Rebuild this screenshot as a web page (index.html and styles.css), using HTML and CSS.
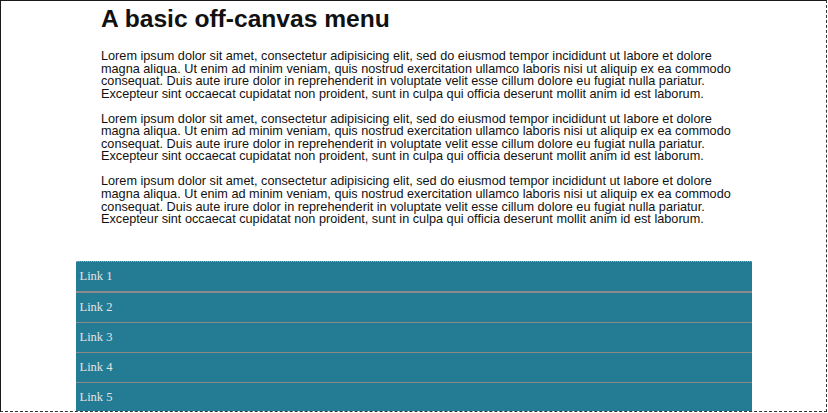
FILE: index.html
```html
<!DOCTYPE html>
<html>
<head>
<meta charset="utf-8">
<link rel="stylesheet" href="styles.css">
</head>
<body>
<div class="frame">
  <main class="content">
    <h1 class="title">A basic off-canvas menu</h1>
    <p class="para">Lorem ipsum dolor sit amet, consectetur adipisicing elit, sed do eiusmod tempor incididunt ut labore et dolore magna aliqua. Ut enim ad minim veniam, quis nostrud exercitation ullamco laboris nisi ut aliquip ex ea commodo consequat. Duis aute irure dolor in reprehenderit in voluptate velit esse cillum dolore eu fugiat nulla pariatur. Excepteur sint occaecat cupidatat non proident, sunt in culpa qui officia deserunt mollit anim id est laborum.</p>
    <p class="para">Lorem ipsum dolor sit amet, consectetur adipisicing elit, sed do eiusmod tempor incididunt ut labore et dolore magna aliqua. Ut enim ad minim veniam, quis nostrud exercitation ullamco laboris nisi ut aliquip ex ea commodo consequat. Duis aute irure dolor in reprehenderit in voluptate velit esse cillum dolore eu fugiat nulla pariatur. Excepteur sint occaecat cupidatat non proident, sunt in culpa qui officia deserunt mollit anim id est laborum.</p>
    <p class="para">Lorem ipsum dolor sit amet, consectetur adipisicing elit, sed do eiusmod tempor incididunt ut labore et dolore magna aliqua. Ut enim ad minim veniam, quis nostrud exercitation ullamco laboris nisi ut aliquip ex ea commodo consequat. Duis aute irure dolor in reprehenderit in voluptate velit esse cillum dolore eu fugiat nulla pariatur. Excepteur sint occaecat cupidatat non proident, sunt in culpa qui officia deserunt mollit anim id est laborum.</p>
  </main>
  <nav class="menu">
    <a class="menu-link first" href="#">Link 1</a>
    <a class="menu-link" href="#">Link 2</a>
    <a class="menu-link" href="#">Link 3</a>
    <a class="menu-link" href="#">Link 4</a>
    <a class="menu-link last" href="#">Link 5</a>
  </nav>
</div>
</body>
</html>
```

FILE: styles.css
```css
html, body {
  margin: 0;
  padding: 0;
  background: #ffffff;
}

.frame {
  box-sizing: border-box;
  width: 827px;
  height: 412px;
  border-top: 1px solid #1a1a1a;
  border-left: 1px solid #1a1a1a;
  border-right: 1px dashed #333;
  border-bottom: 1px dashed #333;
  display: flex;
  flex-direction: column;
  align-items: center;
  overflow: hidden;
}

.content {
  align-self: stretch;
  padding-left: 100px;
  flex: 1;
  min-height: 0;
  color: #111;
  font-family: "Liberation Sans", Arial, sans-serif;
}

.title {
  font-size: 24.6px;
  font-weight: bold;
  line-height: 28px;
  margin: 4px 0 17px;
}

.para {
  width: 642px;
  font-size: 12.7px;
  line-height: 12.55px;
  margin: 0 0 12.55px;
}

.menu {
  flex: none;
  width: 676px;
  height: 149px;
  background: #237b94;
  border-top: 1px dotted #9ab;
  display: flex;
  flex-direction: column;
}

.menu-link {
  display: block;
  height: 29px;
  line-height: 29px;
  padding-left: 4px;
  font-family: "Liberation Serif", "Times New Roman", serif;
  font-size: 12.5px;
  color: #e4e4e4;
  text-decoration: none;
  border-bottom: 1px solid #8a8a8a;
}

.menu-link.first {
  border-bottom-width: 2px;
}

.menu-link.last {
  border-bottom: none;
  flex: 1;
}
```
